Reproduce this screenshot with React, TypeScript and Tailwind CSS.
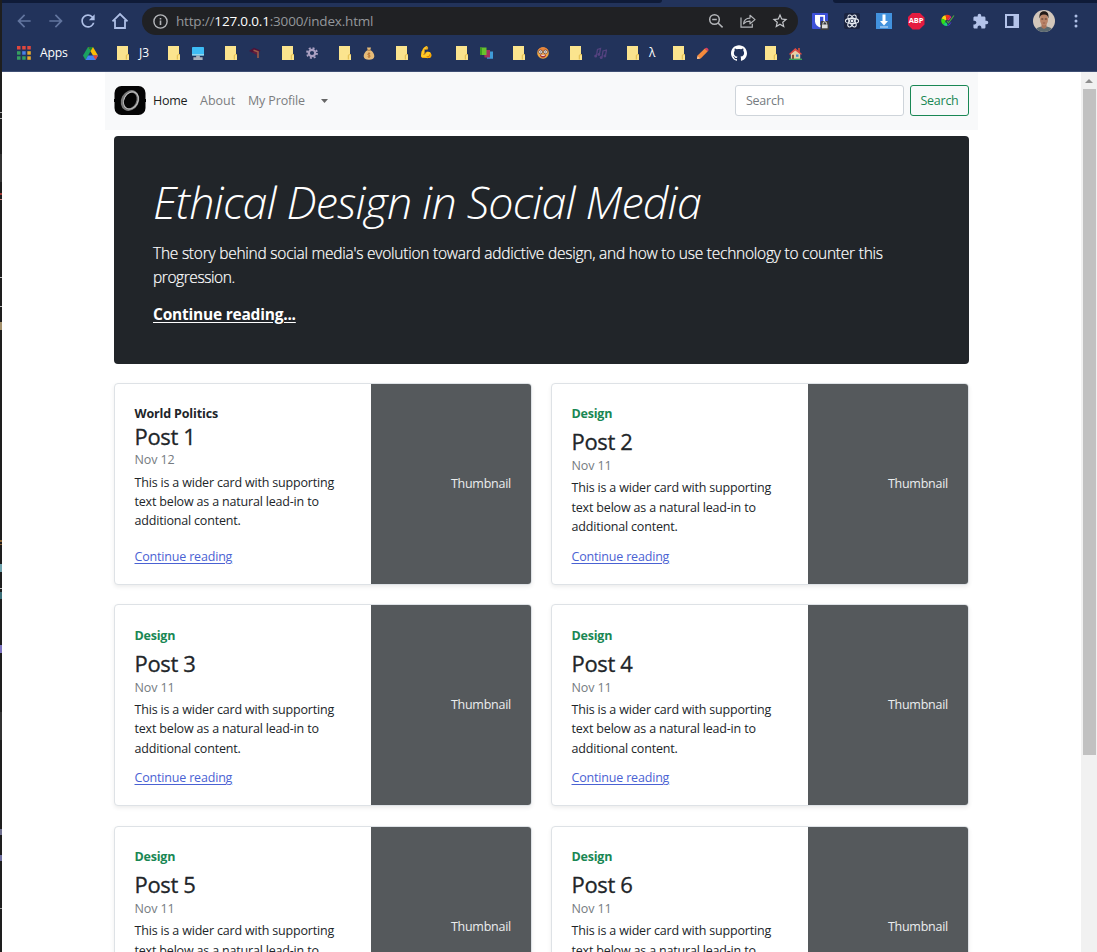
import type { ReactNode } from "react";
import { SiGithub } from "react-icons/si";
import { MdArrowBack, MdArrowForward, MdRefresh, MdExtension, MdStarBorder } from "react-icons/md";

function Cell({ children }: { children: ReactNode }) {
  return <div className="flex w-8 shrink-0 items-center justify-center">{children}</div>;
}

function HomeIcon() {
  return (
    <svg width="18" height="18" viewBox="0 0 18 18" fill="none" stroke="#aebfe6" strokeWidth="1.8">
      <path d="M1.5 9.3 9 2l7.5 7.3M4 8v8h10V8" />
    </svg>
  );
}

function InfoIcon() {
  return (
    <svg width="15" height="15" viewBox="0 0 15 15" fill="none" stroke="#b4b6ba" strokeWidth="1.4">
      <circle cx="7.5" cy="7.5" r="6.6" />
      <path d="M7.5 6.6v4.3M7.5 4v1.5" strokeWidth="1.6" />
    </svg>
  );
}

function ZoomOutIcon() {
  return (
    <svg width="16" height="16" viewBox="0 0 16 16" fill="none" stroke="#b4b6ba" strokeWidth="1.5">
      <circle cx="6.5" cy="6.5" r="4.8" />
      <path d="m10 10 4.6 4.4M4.2 6.5h4.6" />
    </svg>
  );
}

function ShareIcon() {
  return (
    <svg width="16" height="16" viewBox="0 0 16 16" fill="none" stroke="#b4b6ba" strokeWidth="1.2">
      <path d="M1 4.5v9.7h11.3v-3.4" />
      <path d="M3.6 10.8c.3-3.6 2.6-5.6 6.4-5.7V2.3l5 4.3-5 4.2V8.1c-2.9-.1-4.8.8-6.4 2.7z" strokeLinejoin="round" />
    </svg>
  );
}

function BitwardenIcon() {
  return (
    <svg width="17" height="17" viewBox="0 0 17 17">
      <rect width="16" height="16" rx="1" fill="#3c50d8" />
      <path d="M3 2h10v6.5c0 3-2.4 4.7-5 6-2.6-1.3-5-3-5-6z" fill="#fff" />
      <path d="M8 3.8h3.3v4.5c0 2-1.5 3-3.3 4z" fill="#3c50d8" />
      <rect x="8.5" y="8" width="8.5" height="9" rx="1" fill="#3b3b3b" />
      <path d="M11 11.5v-1a1.8 1.8 0 0 1 3.6 0v1" stroke="#ddd" fill="none" />
      <rect x="10" y="11.5" width="5.6" height="3.8" fill="#ddd" />
    </svg>
  );
}

function ReactIcon() {
  return (
    <svg width="16" height="16" viewBox="0 0 16 16">
      <rect width="16" height="16" rx="2" fill="#1b2440" />
      <g fill="none" stroke="#e8ecf2" strokeWidth="1.1">
        <ellipse cx="8" cy="8" rx="6.6" ry="2.6" />
        <ellipse cx="8" cy="8" rx="6.6" ry="2.6" transform="rotate(60 8 8)" />
        <ellipse cx="8" cy="8" rx="6.6" ry="2.6" transform="rotate(120 8 8)" />
      </g>
      <circle cx="8" cy="8" r="1.4" fill="#e8ecf2" />
    </svg>
  );
}

function DownloadIcon() {
  return (
    <svg width="16" height="16" viewBox="0 0 16 16">
      <rect width="16" height="16" fill="#4292de" />
      <path d="M6.5 1.5h3V8H12l-4 4.5L4 8h2.5z" fill="#fff" />
      <path d="M4 14h8" stroke="#cfe4fa" />
    </svg>
  );
}

function AdblockIcon() {
  return (
    <div className="flex size-[17px] shrink-0 items-center justify-center bg-[#e51b40] text-[7.5px] leading-none font-bold tracking-[-0.2px] text-white [clip-path:polygon(30%_0,70%_0,100%_30%,100%_70%,70%_100%,30%_100%,0_70%,0_30%)]">
      ABP
    </div>
  );
}

function ColorWheelIcon() {
  return (
    <svg width="16" height="16" viewBox="0 0 16 16">
      <path d="M7 8 1.5 5.5A6 6 0 0 1 5.500 2z" fill="#f7d613" />
      <path d="M7 8 5.500 2A6 6 0 0 1 10.500 3z" fill="#f0331c" />
      <path d="M7 8 10.500 3 12.500 6z" fill="#f42a8a" />
      <path d="M7 8 1.500 5.500A6 6 0 0 0 3 11.500z" fill="#35e014" />
      <path d="M7 8 3 11.500A6 6 0 0 0 7.500 13z" fill="#19d873" />
      <path d="M8 10 7.500 13a6 6 0 0 0 4-4z" fill="#5a3be0" />
      <path d="m6 7.500 2.500 2.600L14.500 2" stroke="#22335b" strokeWidth="2.600" fill="none" />
      <path d="m7 8 1.500 1.800L14 2.500" stroke="#4fa33c" strokeWidth="1.200" fill="none" />
    </svg>
  );
}

function SidePanelIcon() {
  return (
    <svg width="14" height="14" viewBox="0 0 14 14">
      <path d="M0 0h14v14H0zM2 2v10h6.500V2z" fill="#b3c3ea" fillRule="evenodd" />
    </svg>
  );
}

function Avatar() {
  return (
    <svg width="22" height="22" viewBox="0 0 22 22">
      <defs>
        <clipPath id="avatar-clip">
          <circle cx="11" cy="11" r="11" />
        </clipPath>
      </defs>
      <g clipPath="url(#avatar-clip)">
        <rect width="22" height="22" fill="#d3c7bb" />
        <path d="M2 22c.5-4 3.500-5.500 9-5.500s8.500 1.500 9 5.500z" fill="#5c6a70" />
        <path d="M8.500 13h5v4.500L11 19l-2.500-1.500z" fill="#a8745a" />
        <ellipse cx="11" cy="9.500" rx="4" ry="6" fill="#b98468" />
        <path d="M6.600 8.500C5.900 3.800 7.800 1.300 11 1.300s5.100 2.500 4.400 7.200c-.6-2.600-1.400-3.900-4.400-3.900S7.200 5.900 6.600 8.500z" fill="#211a18" />
        <path d="M8.300 9h2M11.800 9h2" stroke="#3d2b25" strokeWidth=".9" />
        <path d="M9.800 13h2.400" stroke="#8b4f43" strokeWidth=".7" />
      </g>
    </svg>
  );
}

function MenuDots() {
  return (
    <svg width="4" height="14" viewBox="0 0 4 14" fill="#aebfe6">
      <circle cx="2" cy="2" r="1.500" />
      <circle cx="2" cy="7" r="1.500" />
      <circle cx="2" cy="12" r="1.500" />
    </svg>
  );
}

function AppsGrid() {
  return (
    <svg width="14" height="14" viewBox="0 0 14 14">
      <path d="M0 0h3.500v3.500H0zM5.200 0h3.500v3.500H5.200zM10.300 0h3.500v3.500h-3.500z" fill="#e0473d" />
      <path d="M0 5.200h3.500v3.500H0z" fill="#35a060" />
      <path d="M5.200 5.200h3.500v3.500H5.200z" fill="#4a82e8" />
      <path d="M10.300 5.200h3.500v3.500h-3.500z" fill="#e9ab2c" />
      <path d="M0 10.300h3.500v3.500H0zM5.200 10.300h3.500v3.500H5.200z" fill="#35a060" />
      <path d="M10.300 10.300h3.500v3.500h-3.500z" fill="#e9ab2c" />
    </svg>
  );
}

function DriveIcon() {
  return (
    <svg className="-ml-px" width="15" height="13" viewBox="0 0 15 13">
      <path d="M5 0 7.500 4.300 2.500 13 0 8.600z" fill="#1aa260" />
      <path d="M5 0h5l5 8.600h-5z" fill="#fbbc05" />
      <path d="M5 8.600h10L12.500 13h-10z" fill="#4285f4" />
      <path d="M10 8.600h5L12.500 13z" fill="#ea4335" />
      <path d="M5 0h5L7.500 4.300z" fill="#188038" />
    </svg>
  );
}

function Folder() {
  return (
    <svg className="shrink-0" width="12" height="14" viewBox="0 0 12 14">
      <path d="M0 0h11v8.500h1V14H0z" fill="#fbe48e" />
      <path d="M9.300 13.500v-3.800q0-1 1-1H12" stroke="#e0b949" fill="none" />
    </svg>
  );
}

function GradCap() {
  return (
    <svg width="12" height="12" viewBox="0 0 12 12">
      <path d="M0 4 5 .8 11.500 3.500 8 7.500z" fill="#4d1238" />
      <path d="M2.500 5 8 8V5z" fill="#5f1d40" />
      <path d="M4.500 3.300 9 4.800V11" stroke="#9d5b48" strokeWidth="1.600" fill="none" />
    </svg>
  );
}

function Monitor() {
  return (
    <svg width="12" height="13" viewBox="0 0 13 13" preserveAspectRatio="none">
      <rect width="13" height="8.500" rx=".8" fill="#3dbcf5" />
      <path d="M0 7h13v1.500H0z" fill="#93d7ee" />
      <path d="M4.500 8.500h4v1.700h-4zM1.500 10.300h10V13h-10z" fill="#a9b1bb" />
    </svg>
  );
}

function Gear() {
  return (
    <svg width="12" height="12" viewBox="0 0 12 12" fill="none" stroke="#aaa0c2">
      <circle cx="6" cy="6" r="3.200" strokeWidth="2.200" />
      <circle cx="6" cy="6" r="5" strokeWidth="1.800" strokeDasharray="2 1.927" />
    </svg>
  );
}

function MoneyBag() {
  return (
    <svg width="12" height="13" viewBox="0 0 12 13">
      <path d="M4 .5h4L7.300 3C10 4.500 11.500 7 11.300 9.500 11 12 9 12.700 6 12.700S1 12 .7 9.500C.5 7 2 4.500 4.700 3z" fill="#e6bb78" />
      <path d="M4.300 3.200h3.400" stroke="#a5743f" />
      <path d="M7.200 6.500C5.500 5.900 4.600 6.600 4.800 7.400c.2.900 2.400.6 2.400 1.700 0 .9-1.400 1.200-2.500.5M6 5.500v5.400" stroke="#b5702e" strokeWidth=".9" fill="none" />
    </svg>
  );
}

function Books() {
  return (
    <svg width="13" height="12" viewBox="0 0 13 12">
      <path d="M6.500 4.500H13v7.300H7z" fill="#3f9bd8" />
      <path d="M4 3h6v7.500H4.500z" fill="#a3305f" />
      <path d="M0 .5h6.500V8H0z" fill="#67c12d" />
      <path d="M0 .5h2V8H0z" fill="#3d9c20" />
    </svg>
  );
}

function MusicNotes() {
  return (
    <svg width="13" height="12" viewBox="0 0 13 12" fill="none" stroke="#54427f" strokeWidth="1.300">
      <path d="M2.500 8.500 3.500 2.500l3-1-1 5.500M8 10l1-6 3.500-1-1 5.500" />
      <g fill="#54427f" stroke="none">
        <circle cx="1.700" cy="9" r="1.500" />
        <circle cx="4.900" cy="7.500" r="1.400" />
        <circle cx="7.200" cy="10.500" r="1.500" />
        <circle cx="10.900" cy="9" r="1.400" />
      </g>
    </svg>
  );
}

function NerdFace() {
  return (
    <svg width="12" height="12" viewBox="0 0 12 12">
      <circle cx="6" cy="6" r="5.800" fill="#f2a742" />
      <path d="M.6 4A5.800 5.800 0 0 1 11.400 4z" fill="#e8843a" />
      <g fill="#fff" stroke="#4b3030" strokeWidth=".7">
        <circle cx="3.600" cy="4.900" r="1.900" />
        <circle cx="8.400" cy="4.900" r="1.900" />
      </g>
      <circle cx="3.800" cy="4.900" r=".6" fill="#3a2620" />
      <circle cx="8.200" cy="4.900" r=".6" fill="#3a2620" />
      <path d="M3 7.800h6c-.3 2-1.300 2.800-3 2.800S3.300 9.800 3 7.800z" fill="#a22f37" />
      <path d="M4.300 7.800h3.400v1H4.300z" fill="#fff" />
    </svg>
  );
}

function Pencil() {
  return (
    <svg width="12" height="13" viewBox="0 0 13 13">
      <path d="m0 12.500.6-3.800L8.500 1l3.200 3.100L4 11.900z" fill="#f58a3c" />
      <path d="M8.500 1q1.600-1.600 3.200 0t0 3.100z" fill="#dc3f62" />
      <path d="m0 12.500.6-3.300 2.800 2.700z" fill="#f6c59a" />
    </svg>
  );
}

function House() {
  return (
    <svg width="13" height="13" viewBox="0 0 13 13">
      <path d="M9 1h2v4H9z" fill="#b8483c" />
      <path d="M6.300 2.500 11.200 6.500V12H1.800V6.500z" fill="#e6cfa6" />
      <path d="M0 7 6.300 1 13 7l-1 .8L6.300 3.400 1 7.800z" fill="#df4a43" />
      <path d="M3 7.800h2V12H3z" fill="#8f4a35" />
      <path d="M7 7.500h2.500v2.300H7z" fill="#3f8fc9" />
      <path d="M0 11.600h13V13H0z" fill="#3fa35a" />
    </svg>
  );
}

type Bookmark = { layout: string; label: ReactNode };

const folders: Bookmark[] = [
  { layout: "w-[51px] gap-2.5", label: <span className="text-[12px] text-white">J3</span> },
  { layout: "w-[57px] gap-3", label: <Monitor /> },
  { layout: "w-[57px] gap-3", label: <GradCap /> },
  { layout: "w-[57px] gap-3", label: <Gear /> },
  { layout: "w-[57px] gap-3", label: <MoneyBag /> },
  {
    layout: "w-[60px] gap-[11px]",
    label: <span className="font-['Noto_Color_Emoji',sans-serif] text-[11.5px] leading-none">💪</span>,
  },
  { layout: "w-[57px] gap-3", label: <Books /> },
  { layout: "w-[57px] gap-3", label: <NerdFace /> },
  { layout: "w-[57px] gap-3", label: <MusicNotes /> },
  { layout: "w-[46px] gap-2.5", label: <span className="text-[12px] text-white">λ</span> },
  { layout: "w-[58px] gap-3", label: <Pencil /> },
];

function Browser() {
  return (
    <div className="h-[72px] shrink-0 border-b border-[#3f4f74] bg-[#22335b]">
      <div className="flex h-[3px] justify-between">
        <div className="w-[660px] rounded-br-[3px] bg-[#0f1b38]" />
        <div className="w-[264px] rounded-bl-[3px] bg-[#0f1b38]" />
      </div>
      <div className="flex h-9 items-center pl-1.5">
        <Cell><MdArrowBack size={20} color="#62759f" /></Cell>
        <Cell><MdArrowForward size={20} color="#62759f" /></Cell>
        <Cell><MdRefresh size={20} color="#aebfe6" /></Cell>
        <Cell><HomeIcon /></Cell>
        <div className="ml-1.5 flex h-7 w-[656px] items-center rounded-full bg-[#202124] pl-[11px]">
          <InfoIcon />
          <span className="ml-2 flex-1 text-[13.5px] tracking-[-0.18px] text-[#94979b]">
            http://<span className="text-white">127.0.0.1</span>:3000/index.html
          </span>
          <Cell><ZoomOutIcon /></Cell>
          <Cell><ShareIcon /></Cell>
          <Cell><MdStarBorder size={18} color="#c4c6ca" /></Cell>
          <div className="w-0.5" />
        </div>
        <div className="w-1.5" />
        <Cell><BitwardenIcon /></Cell>
        <Cell><ReactIcon /></Cell>
        <Cell><DownloadIcon /></Cell>
        <Cell><AdblockIcon /></Cell>
        <Cell><ColorWheelIcon /></Cell>
        <Cell><MdExtension size={17} color="#b3c3ea" /></Cell>
        <Cell><SidePanelIcon /></Cell>
        <Cell><Avatar /></Cell>
        <Cell><MenuDots /></Cell>
      </div>
      <div className="flex h-7 items-center pl-[15px]">
        <AppsGrid />
        <span className="ml-[9px] w-11 text-[12.2px] tracking-[-0.2px] text-white">Apps</span>
        <DriveIcon />
        <div className="w-[19px]" />
        {folders.map((f, i) => (
          <div key={i} className={`flex shrink-0 items-center ${f.layout}`}>
            <Folder />
            {f.label}
          </div>
        ))}
        <SiGithub size={16} color="#fff" />
        <div className="ml-[18px] flex items-center gap-3">
          <Folder />
          <House />
        </div>
      </div>
    </div>
  );
}

function Logo() {
  return (
    <svg width="32" height="29" viewBox="0 0 32 29">
      <rect x=".5" width="31" height="29" rx="7" fill="#050505" />
      <path d="M0 13h32v3H0z" fill="#050505" />
      <g fill="none" transform="rotate(28 16 14.500)">
        <ellipse cx="16" cy="14.500" rx="7.500" ry="9.500" stroke="#777" strokeWidth="2.600" />
        <ellipse cx="16.800" cy="14" rx="7" ry="9" stroke="#c4c4c4" strokeWidth="1" />
      </g>
    </svg>
  );
}

function Nav() {
  return (
    <nav className="flex h-[58px] w-[873px] shrink-0 items-center bg-[#f8f9fa] px-[9px] pb-px text-[12.5px] text-[#7b7d7f]">
      <Logo />
      <span className="ml-[7px] w-[47px] pt-0.5 tracking-[-0.25px] text-[#1c1c1c]">Home</span>
      <span className="w-12 pt-0.5">About</span>
      <span className="w-[73px] pt-0.5 tracking-[-0.15px]">My Profile</span>
      <svg width="7" height="4" viewBox="0 0 7 4" fill="#666">
        <path d="M0 0h7L3.500 4z" />
      </svg>
      <div className="ml-auto flex h-[31px] w-[169px] items-center rounded-[3px] border border-[#ced4da] bg-white pt-0.5 pl-2.5 tracking-[-0.25px] text-[#757b81]">
        Search
      </div>
      <button className="ml-1.5 h-[31px] w-[59px] rounded-[3px] border border-[#198754] pt-0.5 tracking-[-0.25px] text-[#198754]">
        Search
      </button>
    </nav>
  );
}

function Hero() {
  return (
    <section className="mt-1.5 h-[228px] w-[855px] shrink-0 rounded-[4px] bg-[#212529] px-[39px] pt-[39px] text-white">
      <h1 className="h-[54px] text-[44.8px] leading-[54px] font-light tracking-[-0.82px] italic">
        Ethical Design in Social Media
      </h1>
      <p className="mt-3 text-[15.5px] leading-6 font-light tracking-[-0.235px] [-webkit-text-stroke:0.2px]">
        The story behind social media's evolution toward addictive design, and how to use technology to counter this{" "}
        <span className="tracking-[-0.42px]">progression.</span>
      </p>
      <p className="mt-[13px] text-[15.5px] leading-6 font-bold tracking-[-0.22px]">
        <a className="underline underline-offset-2">Continue reading...</a>
      </p>
    </section>
  );
}

function PostCard({ n, politics }: { n: number; politics?: boolean }) {
  return (
    <article className="flex h-[202px] w-[418px] overflow-hidden rounded-[4px] border border-[#dee2e6] bg-white text-[12.5px] shadow-[0_2px_4px_rgba(0,0,0,0.075)]">
      <div className="flex flex-1 flex-col pt-[20.2px] pr-5 pb-[17px] pl-[19.5px]">
        {politics ? (
          <strong className="mb-[-2.5px] leading-5 font-bold tracking-[-0.15px] text-[#212529]">World Politics</strong>
        ) : (
          <strong className="mb-[3.4px] leading-5 font-bold tracking-[-0.2px] text-[#198754]">Design</strong>
        )}
        <h3 className="h-7 text-[22px] leading-7 font-medium tracking-[-0.35px] text-[#212529] [-webkit-text-stroke:0.3px]">
          Post {n}
        </h3>
        <div className="mt-[0.9px] h-5 leading-5 tracking-[-0.1px] text-[#757b81]">Nov {politics ? 12 : 11}</div>
        <p className="mt-[2.1px] w-[216px] leading-[19.3px] tracking-[-0.18px] text-[#212529]">
          This is a wider card with supporting text below as a natural lead-in to additional content.
        </p>
        <a className="mt-auto leading-5 tracking-[-0.18px] text-[#4a62d3] underline underline-offset-2">Continue reading</a>
      </div>
      <div className="flex w-40 items-center justify-end bg-[#55595c] pr-5 tracking-[-0.25px] text-[#eceeef]">
        Thumbnail
      </div>
    </article>
  );
}

function Scrollbar() {
  return (
    <div className="flex w-4 shrink-0 flex-col items-center bg-[#f1f1f1]">
      <div className="flex h-[17px] items-center justify-center">
        <svg width="8" height="4" viewBox="0 0 8 4" fill="#8f8f8f">
          <path d="M0 4h8L4 0z" />
        </svg>
      </div>
      <div className="h-[666px] w-[13px] bg-[#c1c1c1]" />
    </div>
  );
}

const edgeMarks: [number, number, string][] = [
  [112, 1, "#aaa"],
  [118, 1, "#aaa"],
  [193, 2, "#a33a36"],
  [199, 1, "#c98a86"],
  [277, 1, "#bbb"],
  [306, 1, "#bbb"],
  [322, 8, "#a3906c"],
  [540, 2, "#8a6234"],
  [544, 1, "#8a6234"],
  [564, 8, "#6fa3ad"],
  [588, 1, "#bbb"],
  [592, 7, "#3c6f78"],
  [645, 8, "#7d74c0"],
  [829, 6, "#6f6f8f"],
  [855, 6, "#6f6f9f"],
  [908, 1, "#999"],
];

function WindowEdge() {
  return (
    <svg className="shrink-0" width="2" height="952" viewBox="0 0 2 952">
      <rect width="2" height="952" fill="#1e1e1e" />
      <rect y="154" width="2" height="28" fill="#333" />
      <rect y="712" width="2" height="28" fill="#333" />
      {edgeMarks.map(([y, h, fill]) => (
        <rect key={y} y={y} width="2" height={h} fill={fill} />
      ))}
    </svg>
  );
}

export default function App() {
  return (
    <div className="flex h-[952px] w-[1097px] overflow-hidden bg-white font-['Open_Sans','Liberation_Sans',sans-serif]">
      <WindowEdge />
      <div className="flex min-w-0 flex-1 flex-col">
        <Browser />
        <div className="flex min-h-0 flex-1">
          <main className="flex min-w-0 flex-1 flex-col items-center overflow-hidden">
            <Nav />
            <Hero />
            <div className="mt-[18.9px] grid shrink-0 grid-cols-2 gap-x-[19px] gap-y-[19.5px]">
              <PostCard n={1} politics />
              <PostCard n={2} />
              <PostCard n={3} />
              <PostCard n={4} />
              <PostCard n={5} />
              <PostCard n={6} />
            </div>
          </main>
          <Scrollbar />
        </div>
      </div>
    </div>
  );
}
